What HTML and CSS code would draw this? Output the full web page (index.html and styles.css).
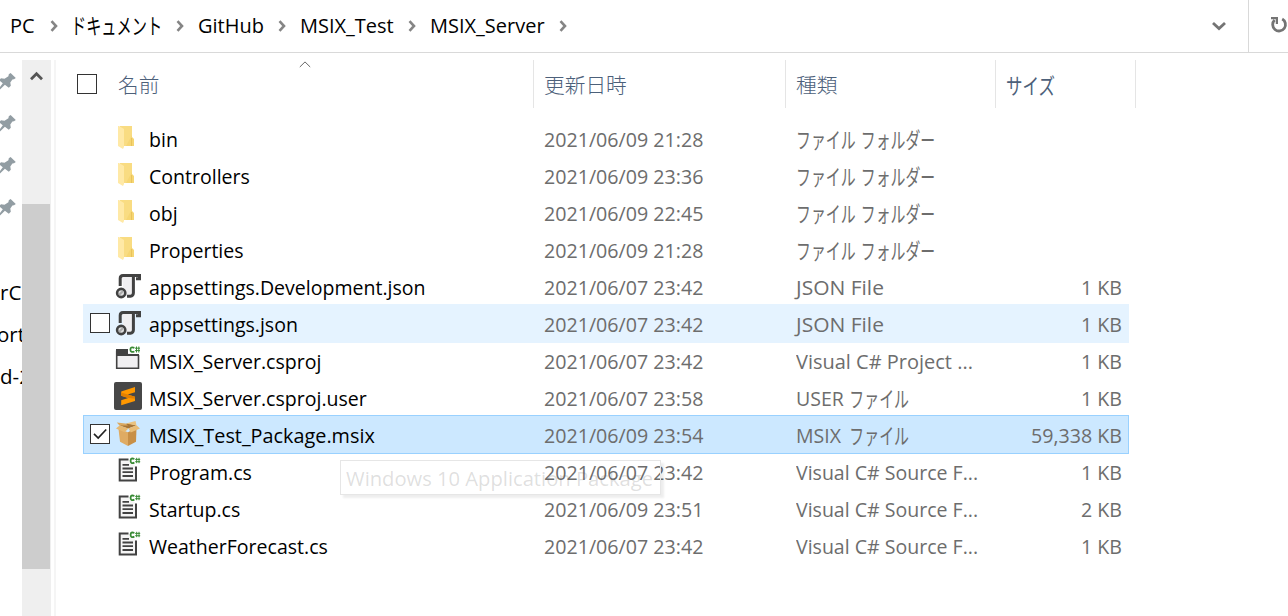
FILE: index.html
```
<!DOCTYPE html>
<html lang="ja">
<head>
<meta charset="utf-8">
<title>MSIX_Server</title>
<link rel="stylesheet" href="styles.css">
</head>
<body>
<svg class="defs" width="0" height="0">
  <symbol id="sep" viewBox="0 0 8 12"><path d="M1.5 1.2 6 6 1.5 10.8" fill="none" stroke="#858585" stroke-width="2.6"/></symbol>
  <symbol id="pin" viewBox="0 0 18 18"><path d="M11.6 1 16.8 6 15 7.2 13.4 7.4 11.3 10.6 11.8 13.8 9.8 15.8 5.9 12.8 1 17.4 0 16.4 3.8 11.2 0 8.2 2 6.3 5.5 6.7 9.4 4.2 9.8 2.2Z" fill="#929da3"/></symbol>
  <symbol id="folder" viewBox="0 0 18 26"><path d="M3 1h12v11l2 2v7H3z" fill="#f6d673"/><path d="M3 1h12v9L9 21H5z" fill="#f9dc82"/><path d="M1 1h1l5 3v18l-1 2-5-3z" fill="#ffe9a6"/><path d="M14 13h1v8h-1z" fill="#e9c35c"/></symbol>
  <symbol id="json" viewBox="0 0 28 28"><path d="M8 5h12v19H9V15z" fill="#f0eff1"/><path d="M6.2 14V6.5Q6.2 3.5 9 3.5H25.5V6.8H22" fill="none" stroke="#424242" stroke-width="3"/><path d="M19.4 5V21Q19.2 24 16.5 24.2L13 24.3" fill="none" stroke="#424242" stroke-width="3"/><circle cx="7.2" cy="21" r="4.1" fill="#ddd" stroke="#424242" stroke-width="2.6"/><path d="M5 23 9 19" stroke="#aaa" stroke-width="1.8"/></symbol>
  <symbol id="proj" viewBox="0 0 28 28"><path d="M2.7 4.5V22.2H24.5V9" fill="#f0eff1" stroke="#424242" stroke-width="1.6"/><path d="M2 3h12v5h11v2H2z" fill="#424242"/><path d="M20.4 1.8Q16.4 .2 16.4 3.6T20.4 5.5" fill="none" stroke="#388a34" stroke-width="1.8"/><path d="M22.5 .5v6M24.8 .5v6M21 2.2h5M21 4.6h5" stroke="#388a34" stroke-width="1"/></symbol>
  <symbol id="subl" viewBox="0 0 28 28"><rect width="28" height="28" rx="2" fill="#474747"/><path d="M7.2 9.5 21 5v5.2l-7.4 2.3L21 14.8V19L7.2 23.2V18.3l7-2.3-7-2.2z" fill="#ff9800"/><path d="m7.2 10.5 13.8 4.3v2l-6.8-.8-7-2.2z" fill="#e27f00"/></symbol>
  <symbol id="box" viewBox="0 0 28 28"><path d="M4.5 9 14 12.2V26L6 21.8z" fill="#dfab63"/><path d="M14 12.2 22.5 8 22 21.8 14 26z" fill="#c88f46"/><path d="M5.5 5.5 14 8.5 22.5 5.5 14 3.2z" fill="#a87535"/><path d="M5.5 5.5 14.5 8.5 10.5 12.2 2 8.6z" fill="#e6b871"/><path d="m14.5 8.5 8-3.3 3.5 3.3-9.2 4z" fill="#e9bd77"/><path d="M5.5 5.5 2.8 2.4 11.5 3.5 14 5.5z" fill="#dba961"/><path d="m12 3.6 9.5-2.6 1 4.4z" fill="#eac27f"/></symbol>
  <symbol id="cs" viewBox="0 0 28 28"><path d="M14.5 2.5H5.7V23.4H22V9.5" fill="#f5f5f5" stroke="#424242" stroke-width="2"/><path d="M8.5 7.8H15M8.5 11.5H19M8.5 15.2H19M8.5 19H19" stroke="#424242" stroke-width="1.8"/><path d="M20.4 2Q16.6 .4 16.6 3.8T20.4 5.7" fill="none" stroke="#388a34" stroke-width="1.8"/><path d="M22.7 .8v5.4M25 .8v5.4M21.2 2.4h5M21.2 4.7h5" stroke="#388a34" stroke-width="1"/></symbol>
</svg>

<header class="address">
  <nav class="crumbs">
    <span class="crumb pc">PC</span><svg class="sep"><use href="#sep"/></svg>
    <span class="crumb docs">ドキュメント</span><svg class="sep"><use href="#sep"/></svg>
    <span class="crumb github">GitHub</span><svg class="sep"><use href="#sep"/></svg>
    <span class="crumb test">MSIX_Test</span><svg class="sep"><use href="#sep"/></svg>
    <span class="crumb server">MSIX_Server</span><svg class="sep"><use href="#sep"/></svg>
  </nav>
  <svg class="drop" viewBox="0 0 16 10"><path d="M2 2 8 7.6 14 2" fill="none" stroke="#747474" stroke-width="2.8"/></svg>
  <div class="refresh"><svg viewBox="0 0 18 18"><path d="M12.2 3A6.4 6.4 0 1 1 4.6 4" fill="none" stroke="#747474" stroke-width="2.8"/><path d="M1 1h7v7H5.8V3.2H1z" fill="#747474"/></svg></div>
</header>

<main class="body">
  <aside class="tree">
    <div class="node"><svg class="pin"><use href="#pin"/></svg></div>
    <div class="node"><svg class="pin"><use href="#pin"/></svg></div>
    <div class="node"><svg class="pin"><use href="#pin"/></svg></div>
    <div class="node"><svg class="pin"><use href="#pin"/></svg></div>
    <div class="node"></div>
    <div class="node label">rC</div>
    <div class="node label ort">ort</div>
    <div class="node label">d-2</div>
  </aside>
  <div class="scroll">
    <svg class="up" viewBox="0 0 13 10"><path d="M1 8.2 6.5 2.8 12 8.2" fill="none" stroke="#555" stroke-width="2.8"/></svg>
    <div class="thumb"></div>
  </div>
  <div class="divider"></div>
  <section class="list">
    <div class="head">
      <div class="h name"><i class="check"></i><span>名前</span><svg class="sort" viewBox="0 0 12 7"><path d="M.8 6 6 .9 11.2 6" fill="none" stroke="#666"/></svg></div>
      <div class="h date"><span>更新日時</span></div>
      <div class="h type"><span>種類</span></div>
      <div class="h size"><span class="katakana">サイズ</span></div>
    </div>
    <div class="rows">
      <div class="row"><i></i><svg class="icon"><use href="#folder" x="3" y="1" width="18" height="26"/></svg><b>bin</b><span class="d">2021/06/09 21:28</span><span class="t"><em class="file">ファイル</em><em class="kana">フォルダー</em></span><span class="s"></span></div>
      <div class="row"><i></i><svg class="icon"><use href="#folder" x="3" y="1" width="18" height="26"/></svg><b>Controllers</b><span class="d">2021/06/09 23:36</span><span class="t"><em class="file">ファイル</em><em class="kana">フォルダー</em></span><span class="s"></span></div>
      <div class="row"><i></i><svg class="icon"><use href="#folder" x="3" y="1" width="18" height="26"/></svg><b>obj</b><span class="d">2021/06/09 22:45</span><span class="t"><em class="file">ファイル</em><em class="kana">フォルダー</em></span><span class="s"></span></div>
      <div class="row"><i></i><svg class="icon"><use href="#folder" x="3" y="1" width="18" height="26"/></svg><b>Properties</b><span class="d">2021/06/09 21:28</span><span class="t"><em class="file">ファイル</em><em class="kana">フォルダー</em></span><span class="s"></span></div>
      <div class="row"><i></i><svg class="icon"><use href="#json"/></svg><b>appsettings.Development.json</b><span class="d">2021/06/07 23:42</span><span class="t wide">JSON File</span><span class="s">1 KB</span></div>
      <div class="row hover"><i class="check"></i><svg class="icon"><use href="#json"/></svg><b>appsettings.json</b><span class="d">2021/06/07 23:42</span><span class="t wide">JSON File</span><span class="s">1 KB</span></div>
      <div class="row"><i></i><svg class="icon"><use href="#proj"/></svg><b>MSIX_Server.csproj</b><span class="d">2021/06/07 23:42</span><span class="t project">Visual C# Project ...</span><span class="s">1 KB</span></div>
      <div class="row"><i></i><svg class="icon up1"><use href="#subl"/></svg><b>MSIX_Server.csproj.user</b><span class="d">2021/06/07 23:58</span><span class="t"><em class="word">USER</em><em class="kana">ファイル</em></span><span class="s">1 KB</span></div>
      <div class="row selected"><i class="check"><svg viewBox="0 0 18 18"><path d="M3 8.8 7.2 13 15.2 4.5" fill="none" stroke="#222" stroke-width="1.7"/></svg></i><svg class="icon"><use href="#box"/></svg><b class="msix">MSIX_Test_Package.msix</b><span class="d">2021/06/09 23:54</span><span class="t"><em class="word">MSIX</em><em class="kana">ファイル</em></span><span class="s">59,338 KB</span></div>
      <div class="row"><i></i><svg class="icon"><use href="#cs"/></svg><b>Program.cs</b><span class="d">2021/06/07 23:42</span><span class="t">Visual C# Source F...</span><span class="s">1 KB</span></div>
      <div class="row"><i></i><svg class="icon"><use href="#cs"/></svg><b>Startup.cs</b><span class="d">2021/06/09 23:51</span><span class="t">Visual C# Source F...</span><span class="s">2 KB</span></div>
      <div class="row"><i></i><svg class="icon"><use href="#cs"/></svg><b>WeatherForecast.cs</b><span class="d">2021/06/07 23:42</span><span class="t">Visual C# Source F...</span><span class="s">1 KB</span></div>
    </div>
  </section>
</main>
<div class="tooltip"><span>Windows 10 Application Package</span></div>
</body>
</html>
```
FILE: styles.css
```
* { box-sizing: border-box; }
body { margin: 0; width: 1288px; height: 616px; overflow: hidden; background: #fff; color: #000;
  font: 20.5px/28px "Open Sans", "Noto Sans CJK JP", sans-serif; white-space: nowrap; }
svg { display: block; flex: none; }
.defs { position: absolute; }

.address { height: 53px; display: flex; align-items: center; border-bottom: 1px solid #d9d9d9; }
.crumbs { flex: 1; display: flex; align-items: center; padding-left: 10px; }
.crumb { transform: scaleX(.975); transform-origin: 0 50%; margin-top: -2px; }
.sep { width: 8px; height: 12px; margin-right: 14px; }
.pc { width: 40px; }
.docs { width: 105px; margin-left: -1px; font-size: 22px; transform: scaleX(.69); }
.github { width: 80px; }
.test { width: 108px; }
.server { width: 129px; }
.drop { width: 16px; height: 10px; margin-right: 21px; }
.refresh { align-self: stretch; width: 40px; border-left: 1px solid #d9d9d9; padding: 16px 0 0 21px; }
.refresh svg { width: 18px; height: 18px; }

.body { display: flex; height: 563px; }
.tree { width: 22px; padding-top: 6px; overflow: hidden; }
.node { height: 42px; display: flex; align-items: center; }
.pin { width: 18px; height: 18px; margin-top: 2px; margin-left: -1px; }
.label { padding-top: 3px; }
.label.ort { margin-left: -3px; }
.scroll { width: 29px; margin-top: 7px; background: #efefef; }
.up { width: 13px; height: 10px; margin: 11px 0 0 8px; }
.thumb { width: 28px; height: 365px; margin-top: 123px; background: #cdcdcd; }
.divider { width: 2px; margin: 7px 0 0 3px; background: #f5f5f5; }
.list { margin-left: 20px; padding-top: 7px; flex: 1; }

.head { display: grid; grid-template-columns: 458px 252px 210px 140px; height: 48px; color: #4c607a; font-weight: 300; }
.h { display: flex; align-items: center; padding-left: 10px; border-right: 1px solid #e5e5e5; }
.h span { font-size: 20.7px; padding-top: 2px; }
.h.name { padding-left: 1px; }
.h.name span { margin-left: 21px; }
.h .katakana { font-size: 22px; font-weight: 400; transform: scaleX(.75); transform-origin: 0 50%; }
.sort { width: 12px; height: 7px; align-self: flex-start; margin: 1px 0 0 140px; }
.check { width: 20px; height: 20px; border: 1px solid #333; background: #fff; }

.rows { margin: 11px 0 0 7px; width: 1046px; }
.row { height: 39px; margin-bottom: -2px; display: grid; align-items: center;
  grid-template-columns: 24px 35px 395px 252px 200px 126px; padding-left: 7px; color: #6d6d6d; }
.row.hover { background: #e5f3ff; }
.row.selected { background: #cce8ff; box-shadow: inset 0 0 0 1px #99d1ff; position: relative; }
.row .check { margin-top: -1px; }
.row .check svg { width: 18px; height: 18px; }
.icon { width: 28px; height: 28px; margin-top: -1px; }
.icon.up1 { margin-top: -3px; }
.row b, .d, .t, .s { padding-top: 1px; transform-origin: 0 50%; font-weight: 400; }
.row b { color: #000; transform: scaleX(.953); }
.row b.msix { transform: scaleX(.967); }
.d { transform: scaleX(.958); }
.t { transform: scaleX(.953); display: flex; }
.t.wide { transform: scaleX(1.024); }
.t.project { transform: scaleX(.975); }
.s { text-align: right; transform: scaleX(.957); transform-origin: 100% 50%; }
em { font-style: normal; }
.file, .kana { font-size: 22px; transform: scaleX(.71); transform-origin: 0 50%; }
.file { width: 68px; }
.word { width: 56px; }

.tooltip { position: absolute; left: 340px; top: 460px; width: 321px; height: 35px; padding: 3px 0 0 5px;
  border: 1px solid #e6e6e6; box-shadow: 3px 3px 2px rgba(0, 0, 0, .07); color: rgba(90, 90, 90, .2); }
.tooltip span { display: inline-block; transform: scaleX(.984); transform-origin: 0 50%; }
```
